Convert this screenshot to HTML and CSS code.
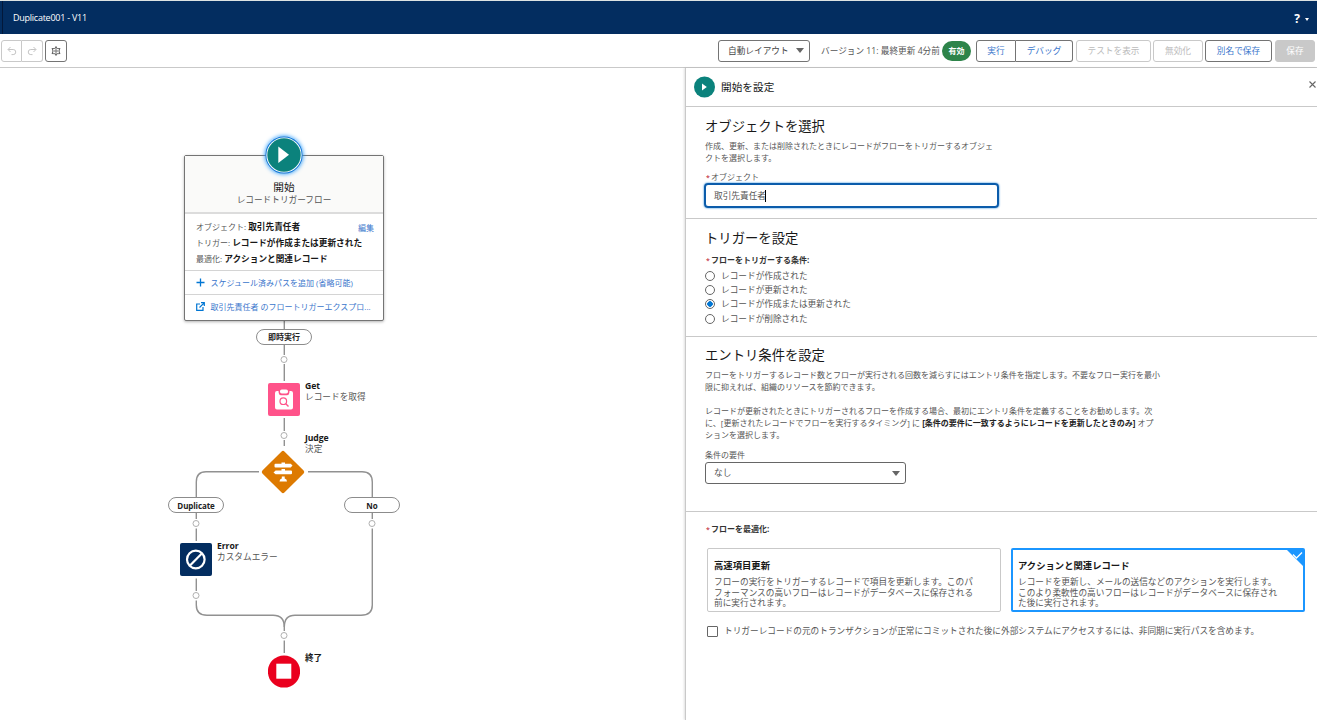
FILE: index.html
```html
<!DOCTYPE html>
<html lang="ja">
<head>
  <meta charset="UTF-8" />
  <meta name="viewport" content="width=device-width, initial-scale=1.0"/>
  <title>Duplicate001 - V11</title>
  <link rel="stylesheet" href="styles.css">
</head>
<body>

  <header class="top-bar">
    <span class="flow-name">Duplicate001 - V11</span>
    <span class="help">?<i class="caret"></i></span>
  </header>

  <div class="toolbar">
    <div class="btn-group history">
      <button class="btn icon-btn disabled">
        <svg width="10" height="10" viewBox="0 0 10 10" fill="none" stroke="#c4c4c4"><path d="M3.5 1L1 3.5L3.5 6M1.2 3.5H6.2A2.4 2.4 0 0 1 6.2 8.6H4.5"/></svg>
      </button>
      <button class="btn icon-btn disabled">
        <svg width="10" height="10" viewBox="0 0 10 10" fill="none" stroke="#c4c4c4"><path d="M6.5 1L9 3.5L6.5 6M8.8 3.5H3.8A2.4 2.4 0 0 0 3.8 8.6H5.5"/></svg>
      </button>
    </div>
    <button class="btn icon-btn gear">
      <svg width="10" height="10" viewBox="0 0 10 10" fill="none" stroke="#666"><path stroke-width="1.1" d="M4.2 2.2L5 .8L5.8 2.2L8.7 2.4L8 5L8.7 7.6L5.8 7.8L5 9.2L4.2 7.8L1.3 7.6L2 5L1.3 2.4Z"/><circle cx="5" cy="5" r="1.2"/></svg>
    </button>

    <div class="toolbar-right">
      <button class="btn layout-select">自動レイアウト<i class="arrow"></i></button>
      <span class="version">バージョン 11: 最終更新 4分前</span>
      <span class="badge">有効</span>
      <div class="btn-group run">
        <button class="btn">実行</button>
        <button class="btn">デバッグ</button>
      </div>
      <button class="btn disabled view-tests">テストを表示</button>
      <button class="btn disabled deactivate">無効化</button>
      <button class="btn save-as">別名で保存</button>
      <button class="btn save">保存</button>
    </div>
  </div>

  <main class="builder">
    <section class="canvas">
      <svg class="connectors" width="685" height="652" viewBox="0 68 685 652" fill="none" stroke="#919191" stroke-width="1.4">
        <path d="M284.3 321V329M284.3 345V355M284.3 364V381M284.3 418V431M284.3 440V446"/>
        <path d="M259 471.8H206Q196.3 471.8 196.3 482V497M308 471.8H362Q372.3 471.8 372.3 482V497"/>
        <path d="M196.3 513V519M196.3 528.5V541M196.3 578.5V591M372.3 513V519"/>
        <path d="M196.3 600.5V605Q196.3 615.3 207 615.3H273Q284.3 615.3 284.3 627V631"/>
        <path d="M372.3 528.5V605Q372.3 615.3 361 615.3H295Q284.3 615.3 284.3 627M284.3 640.5V653"/>
        <g stroke="#b0b0b0" stroke-width="1">
          <circle cx="284" cy="359.5" r="3"/>
          <circle cx="284" cy="435.5" r="3"/>
          <circle cx="196" cy="523.5" r="3"/>
          <circle cx="372" cy="523.5" r="3"/>
          <circle cx="196" cy="595.5" r="3"/>
          <circle cx="284" cy="635.5" r="3"/>
        </g>
      </svg>

      <div class="start-card">
        <div class="start-head">
          <div class="start-title">開始</div>
          <div class="start-type">レコードトリガーフロー</div>
        </div>
        <div class="start-body">
          <a class="edit">編集</a>
          <p>オブジェクト: <b>取引先責任者</b></p>
          <p>トリガー: <b>レコードが作成または更新された</b></p>
          <p>最適化: <b>アクションと関連レコード</b></p>
        </div>
        <a class="start-link">
          <svg width="9" height="9" viewBox="0 0 9 9" stroke="#0176d3" stroke-width="1.3"><path d="M4.5 .5V8.5M.5 4.5H8.5"/></svg>
          スケジュール済みパスを追加 (省略可能)
        </a>
        <a class="start-link">
          <svg width="9" height="9" viewBox="0 0 9 9" fill="none" stroke="#0176d3" stroke-width="1.2"><path d="M4 2H.7V8.3H7V5M5 .7H8.3V4M8.2 .8L3.5 5.5"/></svg>
          取引先責任者 のフロートリガーエクスプロ...
        </a>
      </div>
      <div class="start-icon">
        <svg width="38" height="38" viewBox="0 0 38 38"><circle cx="19" cy="19" r="18.2" fill="#fff" stroke="#1b7fdb" stroke-width="1.2"/><circle cx="19" cy="19" r="16.7" fill="#0b827c"/><path d="M13.3 10.5V27L24 18.8Z" fill="#fff"/></svg>
      </div>

      <div class="pill pill-now">即時実行</div>

      <div class="node node-get">
        <svg width="32" height="33" viewBox="0 0 32 33"><rect width="32" height="33" rx="2" fill="#ff538a"/><path fill="#fff" d="M9 8H10.5Q10.5 12.2 13 12.2H19Q21.5 12.2 21.5 8H23Q25 8 25 10V24.5Q25 26.5 23 26.5H9Q7 26.5 7 24.5V10Q7 8 9 8Z"/><rect x="12" y="6.5" width="8" height="4" rx="1.8" fill="#fff"/><circle cx="15.3" cy="18.2" r="3.3" fill="none" stroke="#ff538a" stroke-width="1.2"/><path d="M17.8 20.7L20.5 23.4" stroke="#ff538a" stroke-width="1.4"/></svg>
        <div class="node-label"><b>Get</b><span>レコードを取得</span></div>
      </div>

      <div class="node node-judge">
        <svg width="44" height="44" viewBox="0 0 44 44"><path d="M20.6 1.4Q22 0 23.4 1.4L42.6 20.6Q44 22 42.6 23.4L23.4 42.6Q22 44 20.6 42.6L1.4 23.4Q0 22 1.4 20.6Z" fill="#dd7a01"/><path fill="#fff" d="M20.5 12.5H24V13.8H29.7L31.5 15.6L29.7 17.4H14.5Q13.5 17.4 13.5 16.4V14.8Q13.5 13.8 14.5 13.8H20.5ZM20.5 18.9H24V20.6H30Q31 20.6 31 21.6V23.2Q31 24.2 30 24.2H14.6L12.5 22.4L14.6 20.6H20.5ZM20.8 26.5H23.7V28.5Q26 29 26 31.5H18.5Q18.5 29 20.8 28.5Z"/></svg>
        <div class="node-label"><b>Judge</b><span>決定</span></div>
      </div>

      <div class="pill pill-duplicate">Duplicate</div>
      <div class="pill pill-no">No</div>

      <div class="node node-error">
        <svg width="32" height="33" viewBox="0 0 32 33"><rect width="32" height="33" rx="2" fill="#032d60"/><g fill="none" stroke="#fff" stroke-width="2.2"><circle cx="15.8" cy="16.5" r="8.8"/><path d="M10 22.5L21.8 10.5"/></g></svg>
        <div class="node-label"><b>Error</b><span>カスタムエラー</span></div>
      </div>

      <div class="node node-end">
        <svg width="32" height="33" viewBox="0 0 32 33"><circle cx="16" cy="16.5" r="16.1" fill="#ea001e"/><path d="M8.3 8.7H23.3V23.7H8.3Z" fill="#fff"/></svg>
        <div class="node-label"><b>終了</b></div>
      </div>
    </section>

    <aside class="panel">
      <div class="panel-head">
        <svg width="22" height="22" viewBox="0 0 22 22"><circle cx="10.5" cy="11" r="10.5" fill="#0b827c"/><path d="M8 7.5V14.5L12.8 11Z" fill="#fff"/></svg>
        <span>開始を設定</span>
        <svg class="close" width="7" height="7" viewBox="0 0 7 7" stroke="#666" stroke-width="1.1"><path d="M.5 .5L6.5 6.5M6.5 .5L.5 6.5"/></svg>
      </div>

      <div class="section section-object">
        <h2>オブジェクトを選択</h2>
        <p class="hint">作成、更新、または削除されたときにレコードがフローをトリガーするオブジェ<br>クトを選択します。</p>
        <div class="field-label"><em>*</em>オブジェクト</div>
        <div class="object-input">取引先責任者<i class="cursor"></i></div>
      </div>

      <div class="section section-trigger">
        <h2>トリガーを設定</h2>
        <div class="field-label bold"><em>*</em>フローをトリガーする条件:</div>
        <div class="radio"><i></i>レコードが作成された</div>
        <div class="radio"><i></i>レコードが更新された</div>
        <div class="radio checked"><i></i>レコードが作成または更新された</div>
        <div class="radio"><i></i>レコードが削除された</div>
      </div>

      <div class="section section-entry">
        <h2>エントリ条件を設定</h2>
        <p class="hint">フローをトリガーするレコード数とフローが実行される回数を減らすにはエントリ条件を指定します。不要なフロー実行を最小<br>限に抑えれば、組織のリソースを節約できます。</p>
        <p class="hint">レコードが更新されたときにトリガーされるフローを作成する場合、最初にエントリ条件を定義することをお勧めします。次<br>に、[更新されたレコードでフローを実行するタイミング] に <b>[条件の要件に一致するようにレコードを更新したときのみ]</b> オプ<br>ションを選択します。</p>
        <div class="field-label">条件の要件</div>
        <div class="select">なし<i class="arrow"></i></div>
      </div>

      <div class="section section-optimize">
        <div class="field-label bold"><em>*</em>フローを最適化:</div>
        <div class="choices">
          <div class="choice">
            <h3>高速項目更新</h3>
            <p>フローの実行をトリガーするレコードで項目を更新します。このパ<br>フォーマンスの高いフローはレコードがデータベースに保存される<br>前に実行されます。</p>
          </div>
          <div class="choice selected">
            <h3>アクションと関連レコード</h3>
            <p>レコードを更新し、メールの送信などのアクションを実行します。<br>このより柔軟性の高いフローはレコードがデータベースに保存され<br>た後に実行されます。</p>
            <svg class="tick" width="18" height="18" viewBox="0 0 18 18"><path d="M0 0H18V18Z" fill="#1b96ff"/><path d="M7 5.5L10.5 9L16 3.5" fill="none" stroke="#fff" stroke-width="1.3"/></svg>
          </div>
        </div>
        <div class="checkbox"><i></i>トリガーレコードの元のトランザクションが正常にコミットされた後に外部システムにアクセスするには、非同期に実行パスを含めます。</div>
      </div>
    </aside>
  </main>

</body>
</html>
```

FILE: styles.css
```css
* {
  box-sizing: border-box;
}

body {
  font-family: "Open Sans", "Noto Sans CJK JP", sans-serif;
  font-size: 8.67px;
  line-height: 12px;
  margin: 0;
  height: 720px;
  overflow: hidden;
  background: #fff;
  color: #555;
  white-space: nowrap;
}

h2, h3, p {
  margin: 0;
}

svg {
  display: block;
  flex: none;
}

.top-bar {
  display: flex;
  align-items: center;
  justify-content: space-between;
  height: 34px;
  padding: 0 8px 0 13px;
  border-top: 1px solid #dde3e3;
  background: linear-gradient(90deg, #032d60 2px, #02183a 2px, #02183a 3px, #032d60 3px);
  color: #fff;
}

.flow-name {
  font-size: 9px;
  letter-spacing: -0.25px;
}

.help {
  display: flex;
  align-items: center;
  gap: 5px;
  font-size: 12px;
  font-weight: bold;
  padding-top: 3px;
}

.caret {
  border: 2.5px solid transparent;
  border-top: 3px solid #fff;
  border-bottom: 0;
}

.arrow {
  border: 4px solid transparent;
  border-top: 5px solid #666;
  border-bottom: 0;
}

.toolbar {
  display: flex;
  align-items: center;
  height: 34px;
  padding: 0 2px 0 1px;
  border-bottom: 1px solid #c9c9c9;
}

.toolbar-right {
  display: flex;
  align-items: center;
  margin-left: auto;
}

.btn {
  display: flex;
  align-items: center;
  justify-content: center;
  height: 22px;
  padding: 0;
  border: 1px solid #747474;
  border-radius: 3px;
  background: #fff;
  color: #3a76cc;
  font: inherit;
}

.btn-group {
  display: flex;
}

.btn-group .btn:first-child {
  border-radius: 3px 0 0 3px;
}

.btn-group .btn:last-child {
  border-left: 0;
  border-radius: 0 3px 3px 0;
}

.btn.disabled {
  border-color: #c9c9c9;
  color: #bbb;
}

.icon-btn {
  width: 21px;
}

.gear {
  width: 22px;
  margin-left: 2px;
}

.layout-select {
  width: 92px;
  justify-content: space-between;
  padding: 0 5px 0 9px;
  color: #444;
}

.version {
  width: 121px;
  margin-left: 11px;
}

.badge {
  width: 29px;
  height: 20px;
  border-radius: 10px;
  background: #2e844a;
  color: #fff;
  font-size: 8px;
  font-weight: bold;
  line-height: 19px;
  text-align: center;
}

.run {
  margin-left: 5px;
  margin-right: 3px;
}

.run .btn:first-child {
  width: 40px;
}

.run .btn:last-child {
  width: 57px;
}

.view-tests {
  width: 75px;
}

.deactivate {
  width: 50px;
  margin-left: 2px;
}

.save-as {
  width: 67px;
  margin: 0 3px 0 2px;
}

.btn.save {
  width: 40px;
  border-color: #c9c9c9;
  background: #c9c9c9;
  color: #fff;
}

.builder {
  display: flex;
  height: 652px;
}

.canvas {
  position: relative;
  width: 685px;
}

/* flow elements sit on a free canvas */
.start-card, .start-icon, .pill, .node {
  position: absolute;
}

.start-card {
  left: 184px;
  top: 87px;
  width: 200px;
  height: 166px;
  border: 1px solid #747474;
  border-radius: 2px;
  background: #fff;
  box-shadow: 0 1px 3px rgba(0, 0, 0, 0.3);
}

.start-head {
  height: 58px;
  padding-top: 25px;
  border-bottom: 2px solid #dcdcdc;
  background: #fafaf9;
  text-align: center;
}

.start-title {
  font-size: 10.67px;
  color: #181818;
}

.start-type {
  padding-top: 1px;
}

.start-body {
  position: relative;
  height: 56px;
  padding: 5px 0 0 11px;
  font-size: 8px;
}

.start-body p {
  line-height: 16px;
}

.start-body b {
  font-size: 8.67px;
  color: #181818;
}

.edit {
  position: absolute;
  right: 9px;
  top: 8px;
  color: #3a76cc;
}

.start-link {
  display: flex;
  align-items: center;
  gap: 5.5px;
  height: 24px;
  padding-left: 11px;
  border-top: 1px solid #d4d4d4;
  color: #3a76cc;
  font-size: 8px;
}

.start-icon {
  left: 265px;
  top: 67.5px;
  border-radius: 50%;
  box-shadow: 0 0 4px #1b96ff;
}

.pill {
  width: 56px;
  height: 16px;
  border: 1px solid #8c8c8c;
  border-radius: 8px;
  background: #fff;
  color: #222;
  font-size: 8px;
  font-weight: bold;
  line-height: 14px;
  text-align: center;
}

.pill-now {
  left: 256px;
  top: 261px;
}

.pill-duplicate {
  left: 168px;
  top: 429px;
  letter-spacing: -0.1px;
  line-height: 16px;
}

.pill-no {
  left: 344px;
  top: 429px;
  line-height: 16px;
}

.node {
  display: flex;
  gap: 5px;
}

.node-label {
  margin-top: -2px;
  line-height: 11px;
}

.node-label b {
  display: block;
  color: #181818;
  letter-spacing: -0.1px;
}

.node-get {
  left: 268px;
  top: 315px;
}

.node-judge {
  left: 261px;
  top: 382px;
  gap: 0;
}

.node-judge .node-label {
  margin-top: -17px;
}

.node-error {
  left: 180px;
  top: 475px;
}

.node-end {
  left: 268px;
  top: 587px;
}

.panel {
  width: 632px;
  border-left: 1px solid #c9c9c9;
  background: #fff;
  box-shadow: -1px 0 2px rgba(0, 0, 0, 0.12);
}

.panel-head {
  display: flex;
  align-items: center;
  gap: 5px;
  height: 39px;
  padding-left: 8px;
  border-bottom: 1px solid #c9c9c9;
  color: #181818;
  font-size: 10.67px;
}

.close {
  margin: 0 1px 5px auto;
}

.section {
  padding-left: 19px;
  border-bottom: 1px solid #c9c9c9;
}

.section h2 {
  color: #181818;
  font-size: 13.33px;
  font-weight: normal;
  line-height: 18px;
}

.hint {
  font-size: 8px;
  line-height: 12px;
}

.hint b {
  color: #222;
}

.field-label {
  height: 12px;
  font-size: 8px;
  line-height: 12px;
}

.field-label.bold {
  font-weight: bold;
  color: #333;
}

.field-label em {
  display: inline-block;
  width: 6px;
  padding-left: 1px;
  color: #ba0517;
  font-size: 7px;
  font-style: normal;
  font-weight: normal;
}

.section-object {
  height: 112px;
  padding-top: 10px;
}

.section-object .hint {
  margin: 5px 0 7px;
}

.object-input {
  display: flex;
  align-items: center;
  width: 295px;
  height: 25px;
  margin: 0 0 0 -1px;
  padding: 0 0 0 8px;
  border: 2px solid #0b5cab;
  border-radius: 4px;
  box-shadow: 0 0 2px #0176d3;
}

.cursor {
  width: 1px;
  height: 12px;
  margin-left: -1px;
  background: #000;
}

.section-trigger {
  height: 118px;
  padding-top: 10px;
}

.section-trigger .field-label {
  margin: 7px 0 2.5px;
}

.radio {
  display: flex;
  align-items: center;
  gap: 6px;
  height: 14.4px;
}

.radio i {
  width: 10px;
  height: 10px;
  border: 1px solid #666;
  border-radius: 50%;
}

.radio.checked i {
  background: radial-gradient(circle, #0176d3 2.5px, #fff 3px);
}

.section-entry {
  height: 175px;
  padding-top: 9px;
}

.section-entry .hint {
  margin: 5px 0 12px;
}

.section-entry .hint + .hint {
  margin-bottom: 8px;
}

.select {
  display: flex;
  align-items: center;
  justify-content: space-between;
  width: 201px;
  height: 22px;
  margin-top: 1px;
  padding: 0 5px 0 8px;
  border: 1px solid #666;
  border-radius: 3px;
}

.section-optimize {
  padding: 11px 0 0 19px;
  border: 0;
}

.choices {
  display: flex;
  gap: 10px;
  margin: 13px 0 13px 2px;
}

.choice {
  position: relative;
  width: 294px;
  height: 64px;
  padding: 11px 0 0 6px;
  border: 1px solid #c9c9c9;
  border-radius: 2px;
  line-height: 10.67px;
}

.choice.selected {
  border: 2px solid #1b96ff;
  padding: 10px 0 0 5px;
}

.choice h3 {
  margin-bottom: 5px;
  color: #181818;
  font-size: 9.33px;
  line-height: 12px;
}

.tick {
  position: absolute;
  top: -1px;
  right: -1px;
}

.checkbox {
  display: flex;
  align-items: center;
  gap: 6px;
  margin-left: 2px;
}

.checkbox i {
  width: 11px;
  height: 11px;
  border: 1px solid #666;
  border-radius: 1px;
}
```
